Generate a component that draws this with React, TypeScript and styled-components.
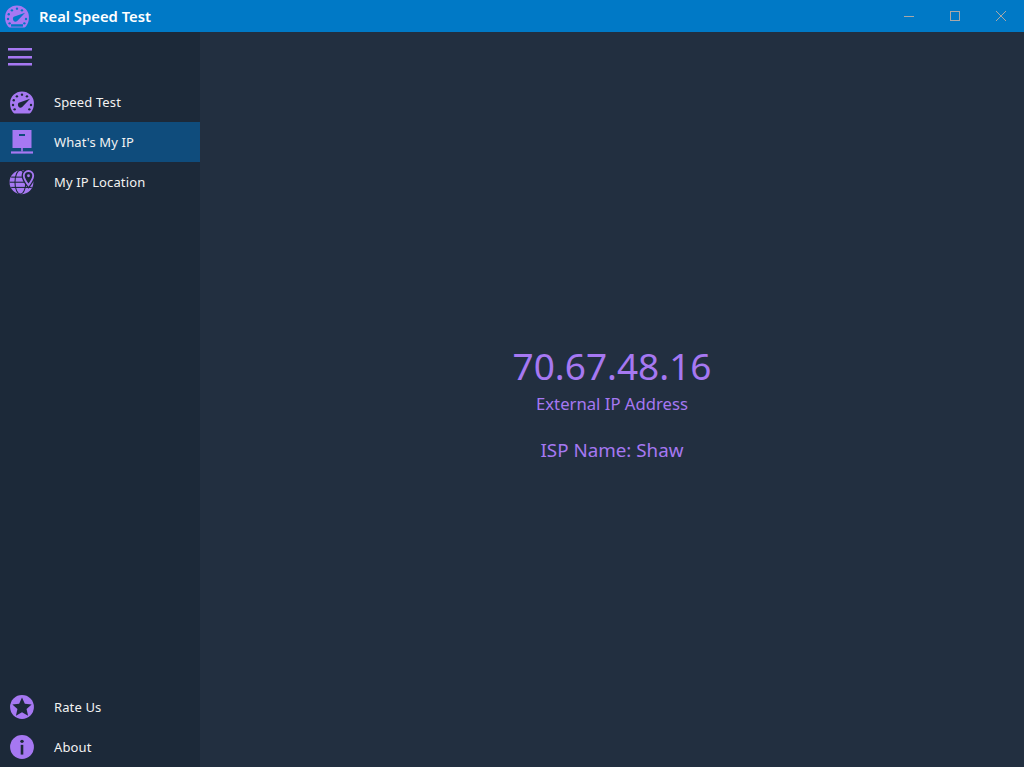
import { ReactNode } from 'react';
import styled, { createGlobalStyle } from 'styled-components';

const PURPLE = '#a678f2';

const GlobalStyle = createGlobalStyle`
  html, body {
    margin: 0;
    padding: 0;
    height: 100%;
    overflow: hidden;
  }
  #root {
    height: 100%;
  }
`;

const Gauge = ({ label = false, bg = '#1c2939' }: { label?: boolean; bg?: string }) => (
  <svg width={26} height={26} viewBox="0 0 24 24">
    <g transform="translate(0 1)">
      <path d="M12 1.200a11 11 0 0 1 11 11c0 3.400-.8 6.200-2.600 8.200-.6.700-1.300 1.200-2.300 1.200H5.900c-1 0-1.700-.5-2.300-1.200C1.800 18.400 1 15.600 1 12.200a11 11 0 0 1 11-11z" fill={PURPLE} />
      <g fill={bg}>
        <circle cx="12" cy="4.200" r="1.100" />
        <circle cx="7.300" cy="5.800" r="1.100" />
        <circle cx="4.400" cy="9.400" r="1.100" />
        <circle cx="3.700" cy="13.800" r="1.100" />
        <circle cx="5.200" cy="17.800" r="1.100" />
        <circle cx="16.600" cy="5.800" r="1.100" />
        <circle cx="20.300" cy="13.800" r="1.100" />
        <circle cx="18.800" cy="17.800" r="1.100" />
      </g>
      <path d="M9 11.800L19.500 8l-7.300 7.600c-1.200 1-2.600.8-3.400-.2-.8-1.200-.8-2.800.2-3.600z" fill={bg} />
      {label && <rect x="6.500" y="18.600" width="11" height="2.200" fill={bg} />}
    </g>
  </svg>
);

const Monitor = () => (
  <svg width={24} height={26} viewBox="0 0 24 26">
    <path d="M2.500 1h19v18h-19z" fill={PURPLE} />
    <rect x="9" y="5" width="6" height="2" fill="#0f4c7c" />
    <path d="M11.200 19h1.600v3.400h-1.600z" fill={PURPLE} />
    <rect x="1" y="22.400" width="22" height="2.200" fill={PURPLE} />
  </svg>
);

const PIN_PATH = 'M18 1a5.200 5.200 0 0 1 5.200 5.200c0 3-2.500 6.800-5.200 10.200-2.700-3.400-5.200-7.200-5.200-10.200A5.200 5.200 0 0 1 18 1z';

const GlobePin = () => (
  <svg width={26} height={26} viewBox="0 0 24 24">
    <circle cx="11.500" cy="12.200" r="11" fill={PURPLE} />
    <g stroke="#1c2939" strokeWidth="1" fill="none">
      <path d="M.5 12.200h14" />
      <path d="M2 7.500h12" />
      <path d="M2 17h19" />
      <ellipse cx="10.500" cy="12.200" rx="5" ry="11" />
    </g>
    <path d={PIN_PATH} fill="#1c2939" stroke="#1c2939" strokeWidth="2.400" />
    <path d={PIN_PATH} fill={PURPLE} />
    <path d="M18 2.700a3.500 3.500 0 0 0-3.500 3.500c0 1.900 1.600 4.600 3.500 7.200 1.900-2.600 3.500-5.300 3.500-7.200A3.500 3.500 0 0 0 18 2.700z" fill="#1c2939" />
    <circle cx="18" cy="6.200" r="1.300" fill={PURPLE} />
  </svg>
);

const StarBadge = () => (
  <svg width={26} height={26} viewBox="0 0 24 24">
    <circle cx="12" cy="12" r="11" fill={PURPLE} />
    <path d="M12 3.300l2.600 5.800 6.300.6-4.700 4.200 1.400 6.200-5.600-3.200-5.600 3.200 1.400-6.200-4.700-4.200 6.300-.6z" fill="#1c2939" />
  </svg>
);

const InfoBadge = () => (
  <svg width={26} height={26} viewBox="0 0 24 24">
    <circle cx="12" cy="12" r="11" fill={PURPLE} />
    <circle cx="12" cy="6.800" r="1.600" fill="#1c2939" />
    <rect x="10.800" y="10" width="2.400" height="9" fill="#1c2939" />
  </svg>
);

const NavItem = ({ icon, label, active }: { icon: ReactNode; label: string; active?: boolean }) => (
  <NavRow $active={active}>
    <NavIcon>{icon}</NavIcon>
    <NavLabel>{label}</NavLabel>
  </NavRow>
);

const App = () => {
  return (
    <>
      <GlobalStyle />
      <Window>
        <TitleBar>
          <AppIcon>
            <Gauge label bg="#0079c6" />
          </AppIcon>
          <AppTitle>Real Speed Test</AppTitle>
          <WindowControls>
            <WindowButton>
              <svg width="10" height="10" viewBox="0 0 10 10">
                <path d="M0 5.500h10" stroke="#a8a8a8" strokeWidth="1" />
              </svg>
            </WindowButton>
            <WindowButton>
              <svg width="10" height="10" viewBox="0 0 10 10">
                <rect x="0.500" y="0.500" width="9" height="9" fill="none" stroke="#a8a8a8" strokeWidth="1" />
              </svg>
            </WindowButton>
            <WindowButton>
              <svg width="10" height="10" viewBox="0 0 10 10">
                <path d="M0 0l10 10M10 0L0 10" stroke="#a8a8a8" strokeWidth="1" />
              </svg>
            </WindowButton>
          </WindowControls>
        </TitleBar>
        <Body>
          <Sidebar>
            <Hamburger>
              <span />
              <span />
              <span />
            </Hamburger>
            <NavGroup>
              <NavItem icon={<Gauge />} label="Speed Test" />
              <NavItem icon={<Monitor />} label="What's My IP" active />
              <NavItem icon={<GlobePin />} label="My IP Location" />
            </NavGroup>
            <BottomGroup>
              <NavItem icon={<StarBadge />} label="Rate Us" />
              <NavItem icon={<InfoBadge />} label="About" />
            </BottomGroup>
          </Sidebar>
          <Main>
            <IpAddress>70.67.48.16</IpAddress>
            <IpCaption>External IP Address</IpCaption>
            <IspName>ISP Name: Shaw</IspName>
          </Main>
        </Body>
      </Window>
    </>
  );
};

const Window = styled.div`
  display: flex;
  flex-direction: column;
  height: 767px;
  width: 1024px;
  font-family: "Noto Sans", "Open Sans", sans-serif;
  background-color: #222f40;
`;

const TitleBar = styled.div`
  display: flex;
  align-items: center;
  height: 32px;
  flex-shrink: 0;
  background-color: #0079c6;
`;

const AppIcon = styled.div`
  display: flex;
  width: 26px;
  height: 26px;
  margin-left: 4px;
`;

const AppTitle = styled.div`
  margin-left: 9px;
  color: #ffffff;
  font-size: 14.8px;
  font-weight: 600;
`;

const WindowControls = styled.div`
  display: flex;
  margin-left: auto;
`;

const WindowButton = styled.div`
  display: flex;
  align-items: center;
  justify-content: center;
  width: 46px;
  height: 32px;
`;

const Body = styled.div`
  display: flex;
  flex: 1;
  min-height: 0;
`;

const Sidebar = styled.div`
  display: flex;
  flex-direction: column;
  width: 200px;
  flex-shrink: 0;
  background-color: #1c2939;
`;

const Hamburger = styled.div`
  display: flex;
  flex-direction: column;
  justify-content: space-between;
  width: 24px;
  height: 18px;
  margin: 16px 0 16px 8px;

  span {
    display: block;
    height: 2px;
    margin-bottom: 1px;
    background-color: ${PURPLE};
    box-shadow: 0 1px 0 rgba(166, 120, 242, 0.55);
  }
`;

const NavGroup = styled.div`
  display: flex;
  flex-direction: column;
`;

const BottomGroup = styled(NavGroup)`
  margin-top: auto;
`;

const NavRow = styled.div<{ $active?: boolean }>`
  display: flex;
  align-items: center;
  height: 40px;
  background-color: ${({ $active }) => ($active ? '#0f4c7c' : 'transparent')};
`;

const NavIcon = styled.div`
  display: flex;
  align-items: center;
  justify-content: center;
  width: 26px;
  margin-left: 9px;
`;

const NavLabel = styled.div`
  margin-left: 19px;
  color: #f2f2f2;
  font-size: 13px;
  letter-spacing: 0.12px;
`;

const Main = styled.div`
  display: flex;
  flex: 1;
  flex-direction: column;
  align-items: center;
  justify-content: center;
  color: ${PURPLE};
  padding-top: 8px;
`;

const IpAddress = styled.div`
  font-size: 37px;
  line-height: 46px;
  margin-bottom: 3px;
  margin-top: -2px;
`;

const IpCaption = styled.div`
  font-size: 16.7px;
  line-height: 24px;
`;

const IspName = styled.div`
  margin-top: 21px;
  font-size: 18.8px;
  line-height: 26px;
`;

export default App;
